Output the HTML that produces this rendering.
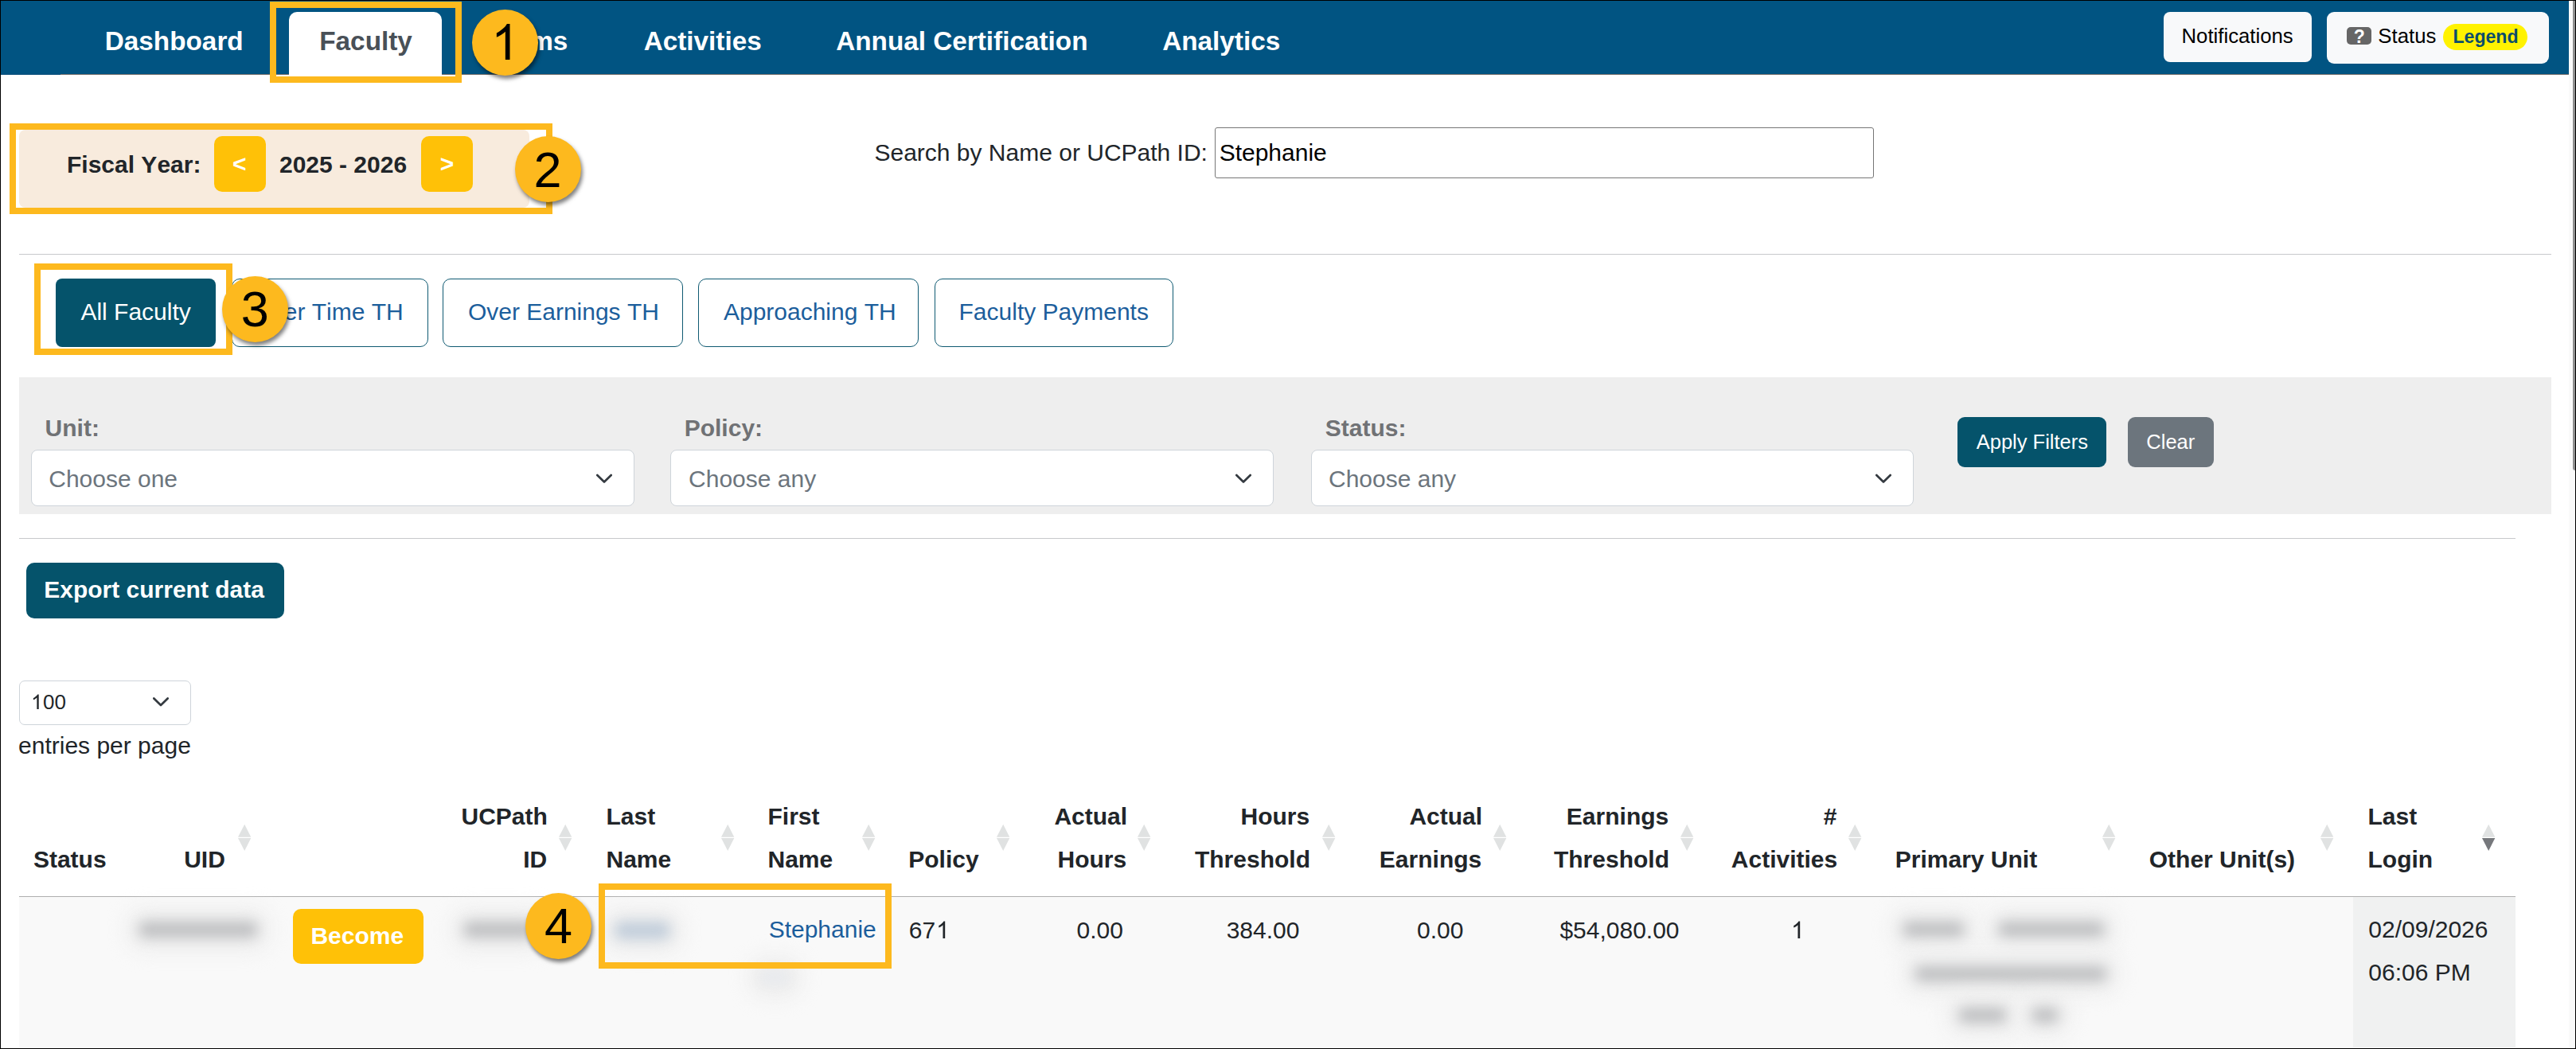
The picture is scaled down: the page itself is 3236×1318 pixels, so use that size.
<!DOCTYPE html>
<html><head><meta charset="utf-8"><style>
html,body{margin:0;padding:0;width:3236px;height:1318px;overflow:hidden;background:#fff}
body{position:relative;font-family:"Liberation Sans",sans-serif}
.t{position:absolute;white-space:nowrap;font-kerning:none}
.r{position:absolute}
</style></head><body>
<div class="r" style="left:0px;top:0px;width:3236px;height:1318px;background:#fff"></div>
<div class="r" style="left:1px;top:1px;width:3226px;height:92px;background:#015482"></div>
<div class="r" style="left:76px;top:93px;width:3151px;height:1px;background:#6f6b68"></div>
<div class="r" style="left:1px;top:93px;width:75px;height:1px;background:#034a78"></div>
<div class="r" style="left:363px;top:15px;width:192px;height:79px;background:#fff;border-radius:10px 10px 0 0"></div>
<div class="t" style="left:131.77px;top:35.11px;font-size:33.3px;line-height:33.3px;font-weight:700;color:#fff;">Dashboard</div>
<div class="t" style="left:401.27px;top:35.21px;font-size:33.3px;line-height:33.3px;font-weight:700;color:#495057;">Faculty</div>
<div class="t" style="left:611.60px;top:35.11px;font-size:33.3px;line-height:33.3px;font-weight:700;color:#fff;">Forms</div>
<div class="t" style="left:808.67px;top:35.11px;font-size:33.3px;line-height:33.3px;font-weight:700;color:#fff;">Activities</div>
<div class="t" style="left:1050.17px;top:35.11px;font-size:33.3px;line-height:33.3px;font-weight:700;color:#fff;">Annual Certification</div>
<div class="t" style="left:1460.17px;top:35.11px;font-size:33.3px;line-height:33.3px;font-weight:700;color:#fff;">Analytics</div>
<div class="r" style="left:2718px;top:15px;width:186px;height:63px;background:#f8f9fa;border-radius:8px"></div>
<div class="t" style="left:2740.49px;top:33.20px;font-size:25.75px;line-height:25.75px;font-weight:400;color:#000;">Notifications</div>
<div class="r" style="left:2923px;top:15px;width:279px;height:65px;background:#f8f9fa;border-radius:9px"></div>
<div class="r" style="left:2948px;top:34px;width:31px;height:22px;background:#666;border-radius:5px"></div>
<div class="t" style="left:2956.81px;top:34.53px;font-size:23px;line-height:23px;font-weight:700;color:#fff;">?</div>
<div class="t" style="left:2987.33px;top:33.00px;font-size:25.75px;line-height:25.75px;font-weight:400;color:#000;">Status</div>
<div class="r" style="left:3069px;top:30px;width:106px;height:33px;background:#fff200;border-radius:17px"></div>
<div class="t" style="left:3081.45px;top:34.94px;font-size:23.1px;line-height:23.1px;font-weight:700;color:#0b4d6b;">Legend</div>
<div class="r" style="left:24px;top:163px;width:641px;height:98px;background:#f8ebdd;border-radius:8px"></div>
<div class="t" style="left:83.99px;top:192.20px;font-size:30px;line-height:30px;font-weight:700;color:#212529;">Fiscal Year:</div>
<div class="r" style="left:269px;top:171px;width:65px;height:70px;background:#ffc107;border-radius:10px"></div>
<div class="t" style="left:292.02px;top:190.60px;font-size:30px;line-height:30px;font-weight:700;color:#fff;">&lt;</div>
<div class="t" style="left:350.96px;top:192.20px;font-size:30px;line-height:30px;font-weight:700;color:#212529;">2025 - 2026</div>
<div class="r" style="left:529px;top:171px;width:65px;height:70px;background:#ffc107;border-radius:10px"></div>
<div class="t" style="left:552.72px;top:190.60px;font-size:30px;line-height:30px;font-weight:700;color:#fff;">&gt;</div>
<div class="t" style="left:1098.44px;top:177.10px;font-size:30px;line-height:30px;font-weight:400;color:#212529;">Search by Name or UCPath ID:</div>
<div class="r" style="left:1526px;top:160px;width:828px;height:64px;border:1.5px solid #767676;border-radius:3px;box-sizing:border-box;background:#fff"></div>
<div class="t" style="left:1531.64px;top:177.10px;font-size:30px;line-height:30px;font-weight:400;color:#000;">Stephanie</div>
<div class="r" style="left:24px;top:319px;width:3181px;height:1.3000000000000114px;background:#c8c9cb"></div>
<div class="r" style="left:70px;top:350px;width:201px;height:86px;background:#05536b;border-radius:8px"></div>
<div class="t" style="left:101.44px;top:377.20px;font-size:30px;line-height:30px;font-weight:400;color:#fff;">All Faculty</div>
<div class="r" style="left:291px;top:350px;width:247px;height:86px;border:1.5px solid #0f5a72;border-radius:10px;box-sizing:border-box"></div>
<div class="t" style="left:318.41px;top:377.20px;font-size:30px;line-height:30px;font-weight:400;color:#1c5e9c;">Over Time TH</div>
<div class="r" style="left:556px;top:350px;width:302px;height:86px;border:1.5px solid #0f5a72;border-radius:10px;box-sizing:border-box"></div>
<div class="t" style="left:587.88px;top:377.20px;font-size:30px;line-height:30px;font-weight:400;color:#1c5e9c;">Over Earnings TH</div>
<div class="r" style="left:877px;top:350px;width:277px;height:86px;border:1.5px solid #0f5a72;border-radius:10px;box-sizing:border-box"></div>
<div class="t" style="left:908.94px;top:377.20px;font-size:30px;line-height:30px;font-weight:400;color:#1c5e9c;">Approaching TH</div>
<div class="r" style="left:1174px;top:350px;width:300px;height:86px;border:1.5px solid #0f5a72;border-radius:10px;box-sizing:border-box"></div>
<div class="t" style="left:1204.54px;top:377.20px;font-size:30px;line-height:30px;font-weight:400;color:#1c5e9c;">Faculty Payments</div>
<div class="r" style="left:24px;top:474px;width:3181px;height:172px;background:#eeeeee"></div>
<div class="t" style="left:56.60px;top:523.10px;font-size:30px;line-height:30px;font-weight:700;color:#707275;">Unit:</div>
<div class="r" style="left:39px;top:565px;width:758px;height:71px;background:#fff;border:1.5px solid #ced4da;border-radius:8px;box-sizing:border-box"></div>
<div class="t" style="left:61.28px;top:586.60px;font-size:30px;line-height:30px;font-weight:400;color:#6c757d;">Choose one</div>
<svg class="r" style="left:749px;top:590px" width="20" height="20" viewBox="0 0 20 20"><polyline points="1.3,7 10,15.5 18.7,7" fill="none" stroke="#343a40" stroke-width="2.7" stroke-linecap="round" stroke-linejoin="round"/></svg>
<div class="t" style="left:859.69px;top:523.10px;font-size:30px;line-height:30px;font-weight:700;color:#707275;">Policy:</div>
<div class="r" style="left:842px;top:565px;width:758px;height:71px;background:#fff;border:1.5px solid #ced4da;border-radius:8px;box-sizing:border-box"></div>
<div class="t" style="left:865.08px;top:586.60px;font-size:30px;line-height:30px;font-weight:400;color:#6c757d;">Choose any</div>
<svg class="r" style="left:1552px;top:590px" width="20" height="20" viewBox="0 0 20 20"><polyline points="1.3,7 10,15.5 18.7,7" fill="none" stroke="#343a40" stroke-width="2.7" stroke-linecap="round" stroke-linejoin="round"/></svg>
<div class="t" style="left:1664.74px;top:523.10px;font-size:30px;line-height:30px;font-weight:700;color:#707275;">Status:</div>
<div class="r" style="left:1647px;top:565px;width:757px;height:71px;background:#fff;border:1.5px solid #ced4da;border-radius:8px;box-sizing:border-box"></div>
<div class="t" style="left:1668.98px;top:586.60px;font-size:30px;line-height:30px;font-weight:400;color:#6c757d;">Choose any</div>
<svg class="r" style="left:2356px;top:590px" width="20" height="20" viewBox="0 0 20 20"><polyline points="1.3,7 10,15.5 18.7,7" fill="none" stroke="#343a40" stroke-width="2.7" stroke-linecap="round" stroke-linejoin="round"/></svg>
<div class="r" style="left:2459px;top:524px;width:187px;height:63px;background:#05536b;border-radius:9px"></div>
<div class="t" style="left:2482.75px;top:542.91px;font-size:25.5px;line-height:25.5px;font-weight:400;color:#fff;">Apply Filters</div>
<div class="r" style="left:2673px;top:524px;width:108px;height:63px;background:#6c757d;border-radius:9px"></div>
<div class="t" style="left:2696.31px;top:542.91px;font-size:25.5px;line-height:25.5px;font-weight:400;color:#fff;">Clear</div>
<div class="r" style="left:24px;top:676px;width:3136px;height:1.2999999999999545px;background:#c8c9cb"></div>
<div class="r" style="left:33px;top:707px;width:324px;height:70px;background:#05536b;border-radius:10px"></div>
<div class="t" style="left:55.19px;top:726.10px;font-size:30px;line-height:30px;font-weight:700;color:#fff;">Export current data</div>
<div class="r" style="left:24px;top:855px;width:216px;height:56px;background:#fff;border:1.5px solid #ced4da;border-radius:7px;box-sizing:border-box"></div>
<svg class="r" style="left:39.40px;top:864.70px;overflow:visible" width="26" height="26" viewBox="0 0 1000 1000"><path transform="translate(0,1000) scale(1,-1)" d="M 283 0 H 373 V 716 H 315 C 299 683 270 649 229 614 C 188 579 150 552 109 530 V 448 C 136 458 166 474 200 495 C 234 516 262 537 283 558 Z" fill="#212529"/></svg>
<div class="t" style="left:53.98px;top:868.99px;font-size:26px;line-height:26px;font-weight:400;color:#212529;">00</div>
<svg class="r" style="left:192px;top:873px" width="20" height="20" viewBox="0 0 20 20"><polyline points="1.3,4.5 10,13 18.7,4.5" fill="none" stroke="#343a40" stroke-width="2.7" stroke-linecap="round" stroke-linejoin="round"/></svg>
<div class="t" style="left:23.03px;top:921.90px;font-size:30px;line-height:30px;font-weight:400;color:#212529;">entries per page</div>
<div class="r" style="left:24px;top:1127px;width:3136px;height:189px;background:#f9f9f9"></div>
<div class="r" style="left:2956px;top:1127px;width:204px;height:189px;background:#f0f1f1"></div>
<div class="r" style="left:24px;top:1126px;width:3136px;height:1.2999999999999545px;background:#aeaeae"></div>
<div class="t" style="left:41.94px;top:1065.10px;font-size:30px;line-height:30px;font-weight:700;color:#212529;">Status</div>
<div class="t" style="left:231.20px;top:1065.10px;font-size:30px;line-height:30px;font-weight:700;color:#212529;">UID</div>
<div class="t" style="left:579.52px;top:1011.00px;font-size:30px;line-height:30px;font-weight:700;color:#212529;">UCPath</div>
<div class="t" style="left:657.26px;top:1065.10px;font-size:30px;line-height:30px;font-weight:700;color:#212529;">ID</div>
<div class="t" style="left:761.49px;top:1011.00px;font-size:30px;line-height:30px;font-weight:700;color:#212529;">Last</div>
<div class="t" style="left:761.49px;top:1065.10px;font-size:30px;line-height:30px;font-weight:700;color:#212529;">Name</div>
<div class="t" style="left:964.49px;top:1011.00px;font-size:30px;line-height:30px;font-weight:700;color:#212529;">First</div>
<div class="t" style="left:964.49px;top:1065.10px;font-size:30px;line-height:30px;font-weight:700;color:#212529;">Name</div>
<div class="t" style="left:1141.29px;top:1065.10px;font-size:30px;line-height:30px;font-weight:700;color:#212529;">Policy</div>
<div class="t" style="left:1324.44px;top:1011.00px;font-size:30px;line-height:30px;font-weight:700;color:#212529;">Actual</div>
<div class="t" style="left:1328.56px;top:1065.10px;font-size:30px;line-height:30px;font-weight:700;color:#212529;">Hours</div>
<div class="t" style="left:1558.56px;top:1011.00px;font-size:30px;line-height:30px;font-weight:700;color:#212529;">Hours</div>
<div class="t" style="left:1500.97px;top:1065.10px;font-size:30px;line-height:30px;font-weight:700;color:#212529;">Threshold</div>
<div class="t" style="left:1770.44px;top:1011.00px;font-size:30px;line-height:30px;font-weight:700;color:#212529;">Actual</div>
<div class="t" style="left:1732.87px;top:1065.10px;font-size:30px;line-height:30px;font-weight:700;color:#212529;">Earnings</div>
<div class="t" style="left:1967.87px;top:1011.00px;font-size:30px;line-height:30px;font-weight:700;color:#212529;">Earnings</div>
<div class="t" style="left:1951.97px;top:1065.10px;font-size:30px;line-height:30px;font-weight:700;color:#212529;">Threshold</div>
<div class="t" style="left:2290.80px;top:1011.00px;font-size:30px;line-height:30px;font-weight:700;color:#212529;">#</div>
<div class="t" style="left:2174.84px;top:1065.10px;font-size:30px;line-height:30px;font-weight:700;color:#212529;">Activities</div>
<div class="t" style="left:2380.79px;top:1065.10px;font-size:30px;line-height:30px;font-weight:700;color:#212529;">Primary Unit</div>
<div class="t" style="left:2699.77px;top:1065.10px;font-size:30px;line-height:30px;font-weight:700;color:#212529;">Other Unit(s)</div>
<div class="t" style="left:2974.49px;top:1011.00px;font-size:30px;line-height:30px;font-weight:700;color:#212529;">Last</div>
<div class="t" style="left:2974.49px;top:1065.10px;font-size:30px;line-height:30px;font-weight:700;color:#212529;">Login</div>
<svg class="r" style="left:299px;top:1035px" width="17" height="35" viewBox="0 0 17 35"><polygon points="8.2,0.7 16.3,16.75 0,16.75" fill="#e0e2e2"/><polygon points="0,18 16.3,18 8.2,33.9" fill="#e0e2e2"/></svg>
<svg class="r" style="left:702px;top:1035px" width="17" height="35" viewBox="0 0 17 35"><polygon points="8.2,0.7 16.3,16.75 0,16.75" fill="#e0e2e2"/><polygon points="0,18 16.3,18 8.2,33.9" fill="#e0e2e2"/></svg>
<svg class="r" style="left:906px;top:1035px" width="17" height="35" viewBox="0 0 17 35"><polygon points="8.2,0.7 16.3,16.75 0,16.75" fill="#e0e2e2"/><polygon points="0,18 16.3,18 8.2,33.9" fill="#e0e2e2"/></svg>
<svg class="r" style="left:1082.5px;top:1035px" width="17" height="35" viewBox="0 0 17 35"><polygon points="8.2,0.7 16.3,16.75 0,16.75" fill="#e0e2e2"/><polygon points="0,18 16.3,18 8.2,33.9" fill="#e0e2e2"/></svg>
<svg class="r" style="left:1252px;top:1035px" width="17" height="35" viewBox="0 0 17 35"><polygon points="8.2,0.7 16.3,16.75 0,16.75" fill="#e0e2e2"/><polygon points="0,18 16.3,18 8.2,33.9" fill="#e0e2e2"/></svg>
<svg class="r" style="left:1429.4px;top:1035px" width="17" height="35" viewBox="0 0 17 35"><polygon points="8.2,0.7 16.3,16.75 0,16.75" fill="#e0e2e2"/><polygon points="0,18 16.3,18 8.2,33.9" fill="#e0e2e2"/></svg>
<svg class="r" style="left:1660.6px;top:1035px" width="17" height="35" viewBox="0 0 17 35"><polygon points="8.2,0.7 16.3,16.75 0,16.75" fill="#e0e2e2"/><polygon points="0,18 16.3,18 8.2,33.9" fill="#e0e2e2"/></svg>
<svg class="r" style="left:1875.5px;top:1035px" width="17" height="35" viewBox="0 0 17 35"><polygon points="8.2,0.7 16.3,16.75 0,16.75" fill="#e0e2e2"/><polygon points="0,18 16.3,18 8.2,33.9" fill="#e0e2e2"/></svg>
<svg class="r" style="left:2110.7px;top:1035px" width="17" height="35" viewBox="0 0 17 35"><polygon points="8.2,0.7 16.3,16.75 0,16.75" fill="#e0e2e2"/><polygon points="0,18 16.3,18 8.2,33.9" fill="#e0e2e2"/></svg>
<svg class="r" style="left:2322px;top:1035px" width="17" height="35" viewBox="0 0 17 35"><polygon points="8.2,0.7 16.3,16.75 0,16.75" fill="#e0e2e2"/><polygon points="0,18 16.3,18 8.2,33.9" fill="#e0e2e2"/></svg>
<svg class="r" style="left:2640.6px;top:1035px" width="17" height="35" viewBox="0 0 17 35"><polygon points="8.2,0.7 16.3,16.75 0,16.75" fill="#e0e2e2"/><polygon points="0,18 16.3,18 8.2,33.9" fill="#e0e2e2"/></svg>
<svg class="r" style="left:2915px;top:1035px" width="17" height="35" viewBox="0 0 17 35"><polygon points="8.2,0.7 16.3,16.75 0,16.75" fill="#e0e2e2"/><polygon points="0,18 16.3,18 8.2,33.9" fill="#e0e2e2"/></svg>
<svg class="r" style="left:3118px;top:1035px" width="17" height="35" viewBox="0 0 17 35"><polygon points="8.2,0.7 16.3,16.75 0,16.75" fill="#e0e2e2"/><polygon points="0,18 16.3,18 8.2,33.9" fill="#76787c"/></svg>
<div class="r" style="left:160px;top:1142px;width:178px;height:52px;background:#ededed;border-radius:20px;filter:blur(12px)"></div>
<div class="r" style="left:174px;top:1158px;width:150px;height:20px;background:#bfc0c2;border-radius:10px;filter:blur(8px)"></div>
<div class="r" style="left:368px;top:1142px;width:164px;height:69px;background:#ffc107;border-radius:10px"></div>
<div class="t" style="left:390.39px;top:1160.60px;font-size:30px;line-height:30px;font-weight:700;color:#fff;">Become</div>
<div class="r" style="left:568px;top:1142px;width:118px;height:52px;background:#ededed;border-radius:20px;filter:blur(12px)"></div>
<div class="r" style="left:582px;top:1158px;width:90px;height:20px;background:#bfc0c2;border-radius:10px;filter:blur(8px)"></div>
<div class="r" style="left:758px;top:1142px;width:98px;height:54px;background:#ededed;border-radius:20px;filter:blur(12px)"></div>
<div class="r" style="left:772px;top:1158px;width:70px;height:22px;background:#c2cedb;border-radius:10px;filter:blur(8px)"></div>
<div class="r" style="left:941px;top:1203px;width:65px;height:50px;background:#ededed;border-radius:20px;filter:blur(12px)"></div>
<div class="r" style="left:955px;top:1219px;width:37px;height:18px;background:#e9ebee;border-radius:10px;filter:blur(6px)"></div>
<div class="t" style="left:965.64px;top:1153.40px;font-size:30px;line-height:30px;font-weight:400;color:#1c5e9c;">Stephanie</div>
<div class="t" style="left:1141.78px;top:1153.60px;font-size:30px;line-height:30px;font-weight:400;color:#212529;">67</div>
<svg class="r" style="left:1175.74px;top:1149.00px;overflow:visible" width="30" height="30" viewBox="0 0 1000 1000"><path transform="translate(0,1000) scale(1,-1)" d="M 283 0 H 373 V 716 H 315 C 299 683 270 649 229 614 C 188 579 150 552 109 530 V 448 C 136 458 166 474 200 495 C 234 516 262 537 283 558 Z" fill="#212529"/></svg>
<div class="t" style="left:1352.53px;top:1153.60px;font-size:30px;line-height:30px;font-weight:400;color:#212529;">0.00</div>
<div class="t" style="left:1540.66px;top:1153.60px;font-size:30px;line-height:30px;font-weight:400;color:#212529;">384.00</div>
<div class="t" style="left:1780.03px;top:1153.60px;font-size:30px;line-height:30px;font-weight:400;color:#212529;">0.00</div>
<div class="t" style="left:1959.38px;top:1153.60px;font-size:30px;line-height:30px;font-weight:400;color:#212529;">$54,080.00</div>
<svg class="r" style="left:2249.71px;top:1149.00px;overflow:visible" width="30" height="30" viewBox="0 0 1000 1000"><path transform="translate(0,1000) scale(1,-1)" d="M 283 0 H 373 V 716 H 315 C 299 683 270 649 229 614 C 188 579 150 552 109 530 V 448 C 136 458 166 474 200 495 C 234 516 262 537 283 558 Z" fill="#212529"/></svg>
<div class="r" style="left:2376px;top:1142px;width:106px;height:51px;background:#ededed;border-radius:20px;filter:blur(12px)"></div>
<div class="r" style="left:2390px;top:1158px;width:78px;height:19px;background:#bfc0c2;border-radius:10px;filter:blur(8px)"></div>
<div class="r" style="left:2496px;top:1142px;width:162px;height:51px;background:#ededed;border-radius:20px;filter:blur(12px)"></div>
<div class="r" style="left:2510px;top:1158px;width:134px;height:19px;background:#bfc0c2;border-radius:10px;filter:blur(8px)"></div>
<div class="r" style="left:2391px;top:1198px;width:270px;height:51px;background:#ededed;border-radius:20px;filter:blur(12px)"></div>
<div class="r" style="left:2405px;top:1214px;width:242px;height:19px;background:#bfc0c2;border-radius:10px;filter:blur(8px)"></div>
<div class="r" style="left:2446px;top:1250px;width:89px;height:51px;background:#ededed;border-radius:20px;filter:blur(12px)"></div>
<div class="r" style="left:2460px;top:1266px;width:61px;height:19px;background:#bfc0c2;border-radius:10px;filter:blur(8px)"></div>
<div class="r" style="left:2538px;top:1250px;width:62px;height:51px;background:#ededed;border-radius:20px;filter:blur(12px)"></div>
<div class="r" style="left:2552px;top:1266px;width:34px;height:19px;background:#bfc0c2;border-radius:10px;filter:blur(8px)"></div>
<div class="t" style="left:2975.33px;top:1153.30px;font-size:30px;line-height:30px;font-weight:400;color:#212529;">02/09/2026</div>
<div class="t" style="left:2975.33px;top:1207.10px;font-size:30px;line-height:30px;font-weight:400;color:#212529;">06:06 PM</div>
<div class="r" style="left:339px;top:2px;width:241px;height:102px;border:8px solid #fdb91e;box-sizing:border-box"></div>
<div class="r" style="left:592.5px;top:11.799999999999997px;width:83.0px;height:83.0px;background:#fdb91e;border-radius:50%;box-shadow:2px 4px 5px rgba(0,0,0,.5)"></div>
<svg class="r" style="left:617.30px;top:12.00px;overflow:visible" width="63" height="63" viewBox="0 0 1000 1000"><path transform="translate(0,1000) scale(1,-1)" d="M 283 0 H 373 V 716 H 315 C 299 683 270 649 229 614 C 188 579 150 552 109 530 V 448 C 136 458 166 474 200 495 C 234 516 262 537 283 558 Z" fill="#000"/></svg>
<div class="r" style="left:12px;top:155px;width:682px;height:114px;border:8px solid #fdb91e;box-sizing:border-box"></div>
<div class="r" style="left:646.5px;top:171.0px;width:83.0px;height:83.0px;background:#fdb91e;border-radius:50%;box-shadow:2px 4px 5px rgba(0,0,0,.5)"></div>
<div class="t" style="left:670.48px;top:181.66px;font-size:63px;line-height:63px;font-weight:400;color:#000;">2</div>
<div class="r" style="left:43px;top:331px;width:249px;height:115px;border:8px solid #fdb91e;box-sizing:border-box"></div>
<div class="r" style="left:278.5px;top:346.8px;width:83.0px;height:83.0px;background:#fdb91e;border-radius:50%;box-shadow:2px 4px 5px rgba(0,0,0,.5)"></div>
<div class="t" style="left:302.67px;top:357.46px;font-size:63px;line-height:63px;font-weight:400;color:#000;">3</div>
<div class="r" style="left:752px;top:1110px;width:368px;height:107px;border:8px solid #fdb91e;box-sizing:border-box"></div>
<div class="r" style="left:659.9px;top:1121.5px;width:83.0px;height:83.0px;background:#fdb91e;border-radius:50%;box-shadow:2px 4px 5px rgba(0,0,0,.5)"></div>
<div class="t" style="left:684.08px;top:1132.16px;font-size:63px;line-height:63px;font-weight:400;color:#000;">4</div>
<div class="r" style="left:3227px;top:0px;width:9px;height:1318px;background:#fafafa"></div>
<div class="r" style="left:3232px;top:1px;width:3px;height:590px;background:#8f8f8f;border-radius:0 0 0 3px"></div>
<div class="r" style="left:0px;top:0px;width:3236px;height:1px;background:#000"></div>
<div class="r" style="left:0px;top:0px;width:1px;height:1318px;background:#000"></div>
<div class="r" style="left:3235px;top:0px;width:1px;height:1318px;background:#000"></div>
<div class="r" style="left:0px;top:1317px;width:3236px;height:1px;background:#000"></div>
</body></html>
